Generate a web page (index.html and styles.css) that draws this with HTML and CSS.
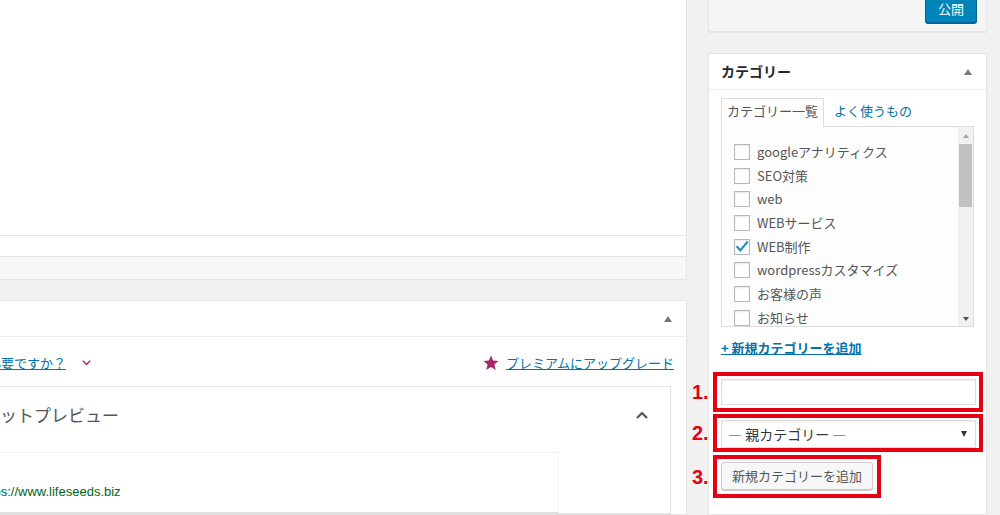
FILE: index.html
```html
<!DOCTYPE html>
<html lang="ja">
<head>
    <meta charset="UTF-8">
    <meta name="viewport" content="width=device-width, initial-scale=1.0">
    <title>投稿の編集</title>
    <link rel="stylesheet" href="styles.css">
</head>
<body>

<div class="page">

    <!-- Main column (editor + Yoast box) -->
    <div class="main">
        <div class="editor">
            <div class="editor-body"></div>
            <div class="editor-row"></div>
            <div class="editor-status"></div>
        </div>

        <div class="postbox yoast">
            <div class="postbox-head">
                <span class="toggle-up"></span>
            </div>
            <div class="yoast-inside">
                <div class="yoast-links">
                    <div class="help">
                        <a href="#" class="help-link">ヘルプが必要ですか？</a>
                        <svg class="chev-down" width="9" height="6" viewBox="0 0 9 6"><path d="M0.8 0.8 L4.5 4.6 L8.2 0.8" fill="none" stroke="#a4286a" stroke-width="1.4"/></svg>
                    </div>
                    <a href="#" class="premium">
                        <svg width="16" height="16" viewBox="0 0 16 16"><path d="M8 0.6 L10.1 5.6 L15.5 6 L11.4 9.5 L12.7 14.9 L8 12 L3.3 14.9 L4.6 9.5 L0.5 6 L5.9 5.6 Z" fill="#a4286a"/></svg>
                        <span>プレミアムにアップグレード</span>
                    </a>
                </div>

                <div class="snippet">
                    <div class="snippet-head">
                        <h3>スニペットプレビュー</h3>
                        <svg width="12" height="8" viewBox="0 0 12 8"><path d="M1 7 L6 2 L11 7" fill="none" stroke="#555" stroke-width="2.2"/></svg>
                    </div>
                    <div class="snippet-body">
                        <div class="snippet-preview">
                            <div class="snippet-url">https://www.lifeseeds.biz</div>
                        </div>
                    </div>
                </div>
            </div>
        </div>
    </div>

    <!-- Sidebar -->
    <div class="side">
        <div class="postbox publish">
            <div class="publish-actions">
                <button class="button-primary">公開</button>
            </div>
        </div>

        <div class="postbox category">
            <div class="postbox-head">
                <h2>カテゴリー</h2>
                <span class="toggle-up"></span>
            </div>
            <div class="inside">
                <ul class="cat-tabs">
                    <li class="active">カテゴリー一覧</li>
                    <li><a href="#">よく使うもの</a></li>
                </ul>
                <div class="tabs-panel">
                    <ul class="cat-list">
                        <li><span class="cb"></span>googleアナリティクス</li>
                        <li><span class="cb"></span>SEO対策</li>
                        <li><span class="cb"></span>web</li>
                        <li><span class="cb"></span>WEBサービス</li>
                        <li><span class="cb"><svg width="14" height="14" viewBox="0 0 14 14"><path d="M1.6 6.2 L5.4 10.4 L12.6 1.6" fill="none" stroke="#1e8cbe" stroke-width="2.2"/></svg></span>WEB制作</li>
                        <li><span class="cb"></span>wordpressカスタマイズ</li>
                        <li><span class="cb"></span>お客様の声</li>
                        <li><span class="cb"></span>お知らせ</li>
                    </ul>
                    <div class="scrollbar">
                        <div class="sb-btn sb-up"><span class="arrow-up"></span></div>
                        <div class="thumb"></div>
                        <div class="sb-track"></div>
                        <div class="sb-btn sb-down"><span class="arrow-down"></span></div>
                    </div>
                </div>

                <a href="#" class="add-toggle">+ 新規カテゴリーを追加</a>

                <div class="step step-1">
                    <span class="step-num">1.</span>
                    <div class="mark mark-wide">
                        <input type="text" class="new-cat">
                    </div>
                </div>
                <div class="step step-2">
                    <span class="step-num">2.</span>
                    <div class="mark mark-wide mark-select">
                        <div class="select">
                            <span>— 親カテゴリー —</span>
                            <span class="select-arrow"></span>
                        </div>
                    </div>
                </div>
                <div class="step step-3">
                    <span class="step-num">3.</span>
                    <div class="mark mark-button">
                        <button class="button">新規カテゴリーを追加</button>
                    </div>
                </div>
            </div>
        </div>
    </div>

</div>

</body>
</html>
```

FILE: styles.css
```css
body {
    margin: 0;
    padding: 0;
    background-color: #f1f1f1;
    font-family: "Noto Sans CJK JP", sans-serif;
    font-size: 13px;
    color: #444;
    overflow: hidden;
    height: 515px;
}

a {
    color: #0073aa;
}

.page {
    display: flex;
    align-items: flex-start;
    gap: 21px;
}

/* ---------- main column ---------- */

.main {
    width: 764px;
    margin-left: -77px;
    flex-shrink: 0;
}

.editor {
    background-color: #fff;
    border-right: 1px solid #e5e5e5;
    border-bottom: 1px solid #e5e5e5;
}

.editor-body {
    height: 235px;
}

.editor-row {
    height: 20px;
    border-top: 1px solid #e5e5e5;
}

.editor-status {
    height: 22px;
    border-top: 1px solid #e5e5e5;
    background-color: #f7f7f7;
}

.postbox {
    background-color: #fff;
    border: 1px solid #e5e5e5;
    box-shadow: 0 1px 1px rgba(0, 0, 0, 0.04);
}

.postbox-head {
    display: flex;
    align-items: center;
    height: 35px;
    border-bottom: 1px solid #eee;
}

.postbox-head h2 {
    flex-grow: 1;
    margin: 0;
    padding: 0 12px;
    font-size: 14px;
    font-weight: 700;
    line-height: 19px;
    color: #23282d;
}

.toggle-up {
    width: 36px;
    height: 35px;
    margin-left: auto;
    display: flex;
    align-items: center;
    justify-content: center;
}

.toggle-up::before {
    content: "";
    width: 0;
    height: 0;
    border-left: 4px solid transparent;
    border-right: 4px solid transparent;
    border-bottom: 6px solid #72777c;
}

.yoast {
    margin-top: 20px;
}

.yoast-inside {
    padding: 0 12px;
}

.yoast-links {
    display: flex;
    justify-content: space-between;
    align-items: center;
    margin-top: 16px;
    line-height: 20px;
}

.help {
    display: flex;
    align-items: center;
}

.chev-down {
    margin-left: 16px;
}

.premium {
    display: flex;
    align-items: center;
    text-decoration: none;
}

.premium svg {
    margin-right: 7px;
}

.premium span {
    text-decoration: underline;
}

.snippet {
    margin-top: 13px;
    margin-right: 3px;
    border: 1px solid #e2e4e7;
    box-shadow: 0 1px 2px rgba(0, 0, 0, 0.05);
}

.snippet-head {
    display: flex;
    align-items: center;
    justify-content: space-between;
    height: 56px;
    padding: 0 22px 0 12px;
}

.snippet-head h3 {
    margin: 0;
    font-size: 17px;
    font-weight: 400;
    line-height: 24px;
    color: #555;
}

.snippet-body {
    padding: 9px 0 0 19px;
}

.snippet-preview {
    width: 603px;
    box-sizing: border-box;
    padding: 30px 0 11px 22px;
    border: 1px solid #f3f3f3;
    border-bottom-color: #dcdcdc;
    background-color: #fff;
}

.snippet-url {
    font-family: "Liberation Sans", Arial, sans-serif;
    font-size: 13px;
    line-height: 18px;
    color: #006621;
}

/* ---------- sidebar ---------- */

.side {
    width: 279px;
    flex-shrink: 0;
}

.publish {
    margin-top: -16px;
    background-color: #f5f5f5;
}

.publish-actions {
    display: flex;
    justify-content: flex-end;
    padding: 10px 9px 8px;
}

.button-primary {
    height: 28px;
    padding: 0 12px;
    border: 1px solid #0073aa;
    border-color: #0073aa #006799 #006799;
    border-radius: 3px;
    background-color: #0085ba;
    box-shadow: 0 1px 0 #006799;
    color: #fff;
    font-family: inherit;
    font-size: 13px;
    line-height: 26px;
}

.category {
    margin-top: 21px;
}

.inside {
    padding: 0 12px 16px;
}

.cat-tabs {
    display: flex;
    margin: 8px 0 0;
    padding: 0;
    list-style: none;
    line-height: 18px;
}

.cat-tabs li {
    padding: 3px 5px 6px;
    border: 1px solid transparent;
    border-bottom: none;
}

.cat-tabs li.active {
    position: relative;
    z-index: 1;
    margin-bottom: -1px;
    border-color: #ddd;
    background-color: #fdfdfd;
    color: #555;
}

.cat-tabs li a {
    text-decoration: none;
}

.cat-tabs li + li {
    margin-left: 4px;
}

.tabs-panel {
    display: flex;
    height: 201px;
    box-sizing: border-box;
    border: 1px solid #ddd;
    background-color: #fdfdfd;
    overflow: hidden;
}

.cat-list {
    flex-grow: 1;
    margin: 0;
    padding: 13px 0 0 12px;
    list-style: none;
    overflow: hidden;
}

.cat-list li {
    display: flex;
    align-items: center;
    height: 23.7px;
    color: #555;
    line-height: 18px;
    white-space: nowrap;
}

.cb {
    width: 16px;
    height: 16px;
    box-sizing: border-box;
    margin-right: 7px;
    border: 1px solid #b4b9be;
    background-color: #fff;
    box-shadow: inset 0 1px 2px rgba(0, 0, 0, 0.1);
    flex-shrink: 0;
}

.cb svg {
    display: block;
}

.scrollbar {
    display: flex;
    flex-direction: column;
    width: 15px;
    background-color: #f1f1f1;
    flex-shrink: 0;
}

.sb-btn {
    display: flex;
    align-items: center;
    justify-content: center;
}

.sb-up {
    height: 17px;
}

.sb-down {
    height: 15px;
}

.arrow-up {
    border-left: 3px solid transparent;
    border-right: 3px solid transparent;
    border-bottom: 4px solid #a3a3a3;
}

.arrow-down {
    border-left: 3px solid transparent;
    border-right: 3px solid transparent;
    border-top: 4px solid #505050;
}

.thumb {
    height: 63px;
    margin: 0 1px;
    background-color: #c1c1c1;
}

.sb-track {
    flex-grow: 1;
}

.add-toggle {
    display: inline-block;
    margin-top: 12px;
    font-weight: 700;
    line-height: 18px;
}

/* numbered steps with red marks */

.step {
    display: flex;
    align-items: center;
    margin-left: -31px;
}

.step-1 {
    margin-top: 15px;
}

.step-2 {
    margin-top: 2px;
}

.step-3 {
    margin-top: 3px;
}

.step-num {
    width: 21px;
    padding-left: 2px;
    flex-shrink: 0;
    color: #e60012;
    font-family: "Liberation Sans", Arial, sans-serif;
    font-size: 20px;
    font-weight: 700;
    line-height: 1;
}

.mark {
    box-sizing: border-box;
    flex-shrink: 0;
    border: 4px solid #e60012;
}

.mark-wide {
    width: 270px;
    padding: 3px 3px 3px 4px;
}

.mark-select {
    padding: 2px 3px 0 4px;
}

.mark-button {
    padding: 3px 4px 4px;
}

.new-cat {
    display: block;
    width: 100%;
    height: 26px;
    box-sizing: border-box;
    margin: 0;
    border: 1px solid #ddd;
    background-color: #fff;
    box-shadow: inset 0 1px 2px rgba(0, 0, 0, 0.07);
}

.select {
    display: flex;
    align-items: center;
    justify-content: space-between;
    height: 28px;
    box-sizing: border-box;
    padding: 0 8px 0 6px;
    border: 1px solid #ddd;
    background-color: #fff;
    box-shadow: inset 0 1px 2px rgba(0, 0, 0, 0.07);
    color: #32373c;
    font-size: 14px;
    line-height: 20px;
}

.select-arrow {
    border-left: 3px solid transparent;
    border-right: 3px solid transparent;
    border-top: 6px solid #32373c;
}

.button {
    display: block;
    height: 28px;
    padding: 0 10px;
    border: 1px solid #ccc;
    border-radius: 3px;
    background-color: #f7f7f7;
    box-shadow: 0 1px 0 #ccc;
    color: #555;
    font-family: inherit;
    font-size: 13px;
    line-height: 26px;
}
```
